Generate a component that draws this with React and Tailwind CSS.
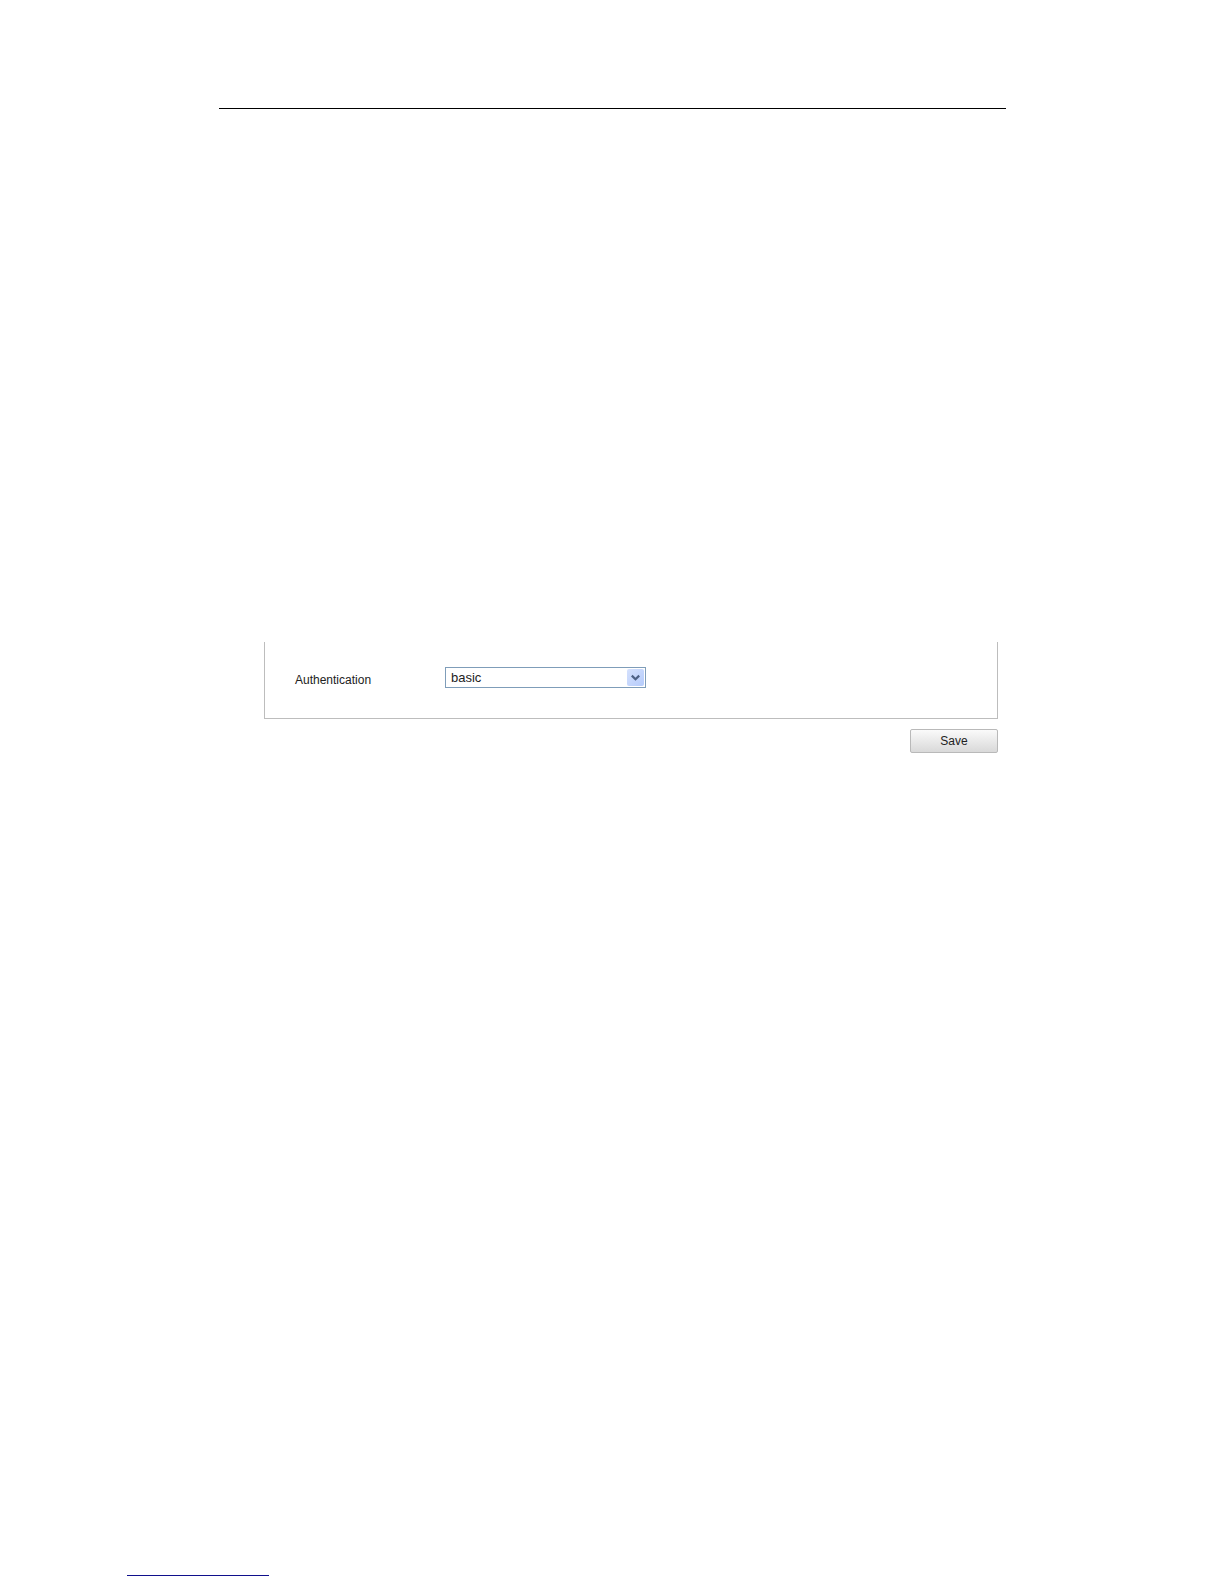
import React, { useState } from 'react';

export default function App() {
    const [authentication, setAuthentication] = useState('basic');

    return (
        <div className="flex min-h-screen flex-col bg-white pt-[108px] pb-2 text-[#222222] font-['Liberation_Sans',Arial,sans-serif]">
            <hr className="mr-[218px] ml-[219px] border-t border-black" />

            <form className="mt-[533px] mr-[226px] ml-[264px]" onSubmit={(e) => e.preventDefault()}>
                {/* --- Settings panel --- */}
                <div className="flex items-start border border-t-0 border-[#bdbdbd] pt-[25px] pb-[29px] pl-[30px]">
                    <label htmlFor="authentication" className="w-[150px] pt-1 text-[12px] leading-[18px]">
                        Authentication
                    </label>
                    <div className="relative w-[201px]">
                        <select
                            id="authentication"
                            value={authentication}
                            onChange={(e) => setAuthentication(e.target.value)}
                            className="block h-[21px] w-full appearance-none border border-[#7f9db9] bg-white pr-6 pl-[5px] text-[13px] leading-[19px]"
                        >
                            <option value="basic">basic</option>
                            <option value="none">none</option>
                        </select>
                        <span className="pointer-events-none absolute inset-y-0.5 right-0.5 flex w-[17px] items-center justify-center rounded-xs bg-linear-to-br from-[#d5e1fd] to-[#b5cbfb]">
                            <svg width="9" height="7" viewBox="0 0 9 7" fill="none" stroke="#4d6185" strokeWidth="2.2">
                                <path d="M0.8 1.6L4.5 5.3L8.2 1.6" />
                            </svg>
                        </span>
                    </div>
                </div>

                <div className="mt-2.5 flex justify-end">
                    <button
                        type="submit"
                        className="h-6 w-[88px] rounded-xs border border-[#b9b9b9] bg-linear-to-b from-[#fafafa] to-[#d9d9d9] text-[12px] leading-[22px]"
                    >
                        Save
                    </button>
                </div>
            </form>

            <hr className="mt-auto ml-[127px] w-[142px] border-t border-[#10108c]" />
        </div>
    );
}
